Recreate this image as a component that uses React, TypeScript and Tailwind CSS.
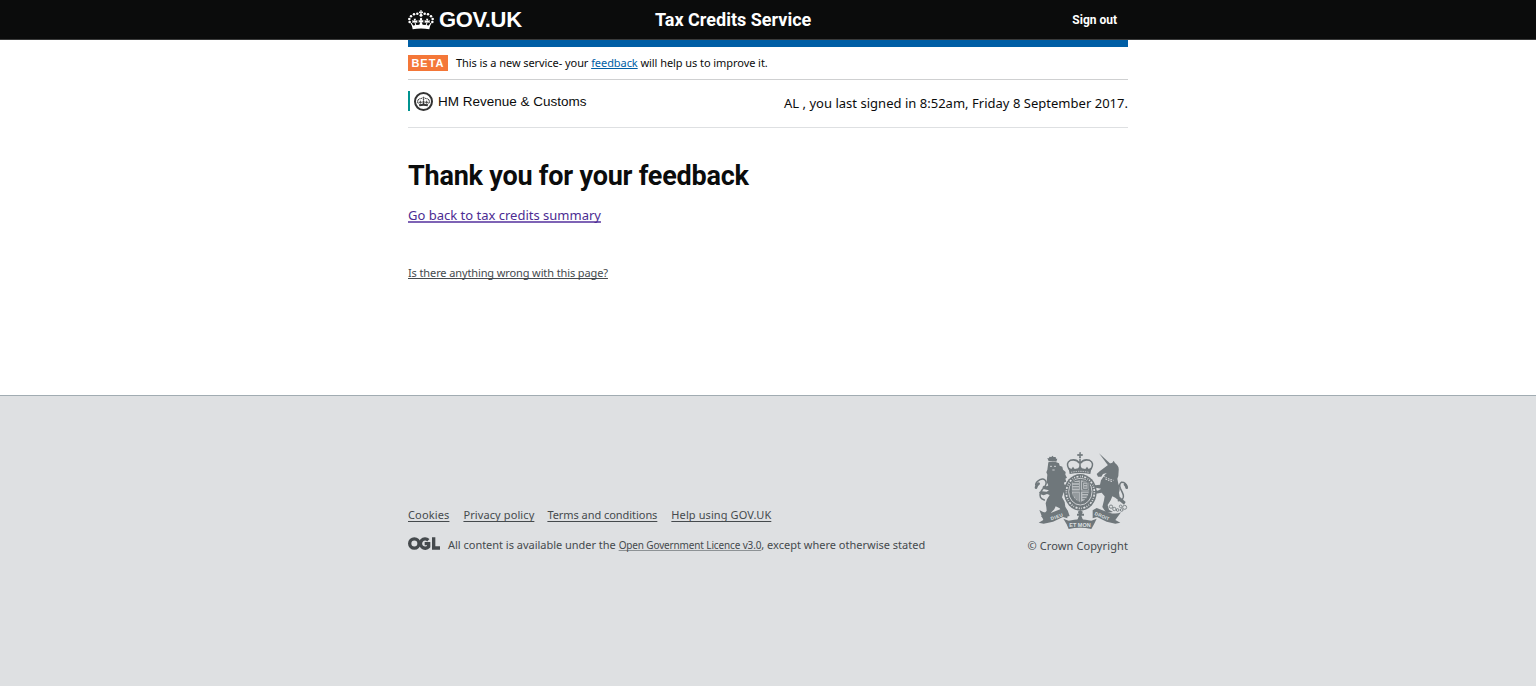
import React from "react";

function Crown({ className }: { className?: string }) {
  return (
    <svg viewBox="0 0 78 60" className={className} fill="currentColor" aria-hidden="true">
      <circle cx="39" cy="16" r="4.500" />
      <path d="M36.500 1h5l-1 4.500 4.500-1v5l-4.500-1 1 5h-5l1-5-4.500 1v-5l4.500 1z" />
      <circle cx="28" cy="11" r="3.800" />
      <circle cx="50" cy="11" r="3.800" />
      <circle cx="18" cy="13" r="3.800" />
      <circle cx="60" cy="13" r="3.800" />
      <circle cx="9" cy="19" r="3.800" />
      <circle cx="69" cy="19" r="3.800" />
      <circle cx="4" cy="27" r="3.800" />
      <circle cx="74" cy="27" r="3.800" />
      <circle cx="5" cy="36" r="3.800" />
      <circle cx="73" cy="36" r="3.800" />
      <circle cx="39" cy="26" r="3" />
      <path d="M7 38l4 1 5 8 6-1-3-9-6 2v-9l6 3-2-7h7l-2 7 6-3v9l-6-2 3 8 9-1 3-8-5 2v-9l5 3-2-6h8l-2 6 5-3v9l-5-2 3 8 9 1 3-8-6 2v-9l6 3-2-7h7l-2 7 6-3v9l-6-2-3 9 6 1 5-8 4-1-6 12H13z" />
      <path d="M12 48q27-6 54 0l-2 10q-25-5-50 0z" />
    </svg>
  );
}

function RoyalArms() {
  return (
    <svg viewBox="39 33 288 237" className="block h-[79px] w-[96px] text-[#6f777b]" fill="currentColor" aria-hidden="true">
      {/* lion */}
      <path d="M86 64l-4-10 5 1 1-5 6 1 3-4 4 4 6 0 1 5 4 0-3 9q-12-4-23-1z" />
      <path d="M85 67q13-5 24 0l8 3 2 7 8 3 2 9 8 7-1 8 5 9-5 3 3 9-6 2-1 6 8 3 8-3 4 5-9 8-8 4-5 10-4 12 8 14 2 14 8 14 5 14-13 3-8-12-9-14-12-6-4 9-9 9-5 8 5 11-12 4-8-3 7-6-12 3-6-5 9-7 8-10-1-10-2-12 4-12 8-13-8-3-10 4-10-3-4-7 9-2 14 1 7-4-14-3-6-6 4-5 10 2 4-3-5-10 1-12 1-10-3-7 3-8z" />
      <path d="M90 79h6M102 79h6M97 90h7" stroke="#dee0e2" strokeWidth="2.500" fill="none" />
      <g fill="none" stroke="currentColor" strokeLinecap="round">
        <path d="M73 180q-17-5-12-21 4-9 12-17 10-13 2-22-6-5-15-1-12 6-13 15" strokeWidth="4.500" />
        <path d="M48 143q2-8 8-12" strokeWidth="8" />
      </g>
      {/* unicorn */}
      <path d="M237 40l35 32-7 5z" />
      <path d="M263 76q7-7 14-8l4-6 4 7q13 9 11 23l-1 16-3 8 3 15q7 13 2 27l2 12 18 16-5 8-11-9-15-12-9-4-5 12-9 14 4 14 12 7-20 3-12-18 5-20 2-12-9-11-18 3-10-5 4-8 12 4 11-6-17-3-16-7-14-1-4-7 8-4 11 5 14 7 14-2 3-13 11-16 6-6-11 3-5 8-10 0-4-8 9-8z" />
      <g fill="none" stroke="currentColor" strokeLinecap="round">
        <path d="M295 182q18-2 15-17-3-9-9-20-5-13 3-18 14-1 18 16" strokeWidth="4.500" />
        <path d="M315 134q4 4 5 9" strokeWidth="8" />
      </g>
      <g fill="none" stroke="currentColor" strokeWidth="2.500">
        <circle cx="273" cy="200" r="5" /><circle cx="283" cy="207" r="5" /><circle cx="293" cy="210" r="4" />
        <circle cx="305" cy="210" r="4" /><circle cx="314" cy="202" r="6" /><circle cx="302" cy="199" r="4" />
      </g>
      <path d="M250 108q14 9 31 13M256 117l20 8" stroke="#dee0e2" strokeWidth="3" fill="none" strokeDasharray="5 3" />
      {/* crown */}
      <path d="M178 37h5l-1 6 6-1v6l-6-1 1 8h-6l1-8-6 1v-6l6 1z" />
      <g fill="none" stroke="currentColor" strokeWidth="4.500">
        <path d="M147 88q-11-19 4-27 18-5 27 8M213 88q11-19-4-27-18-5-27 8M180 57v30" />
      </g>
      <path d="M145 82l9 5 5-7 5 7 10-2 6-8 6 8 10 2 5-7 5 7 9-5-4 20q-31-6-62 0z" />
      <path d="M153 97q27-6 54 0" stroke="#dee0e2" strokeWidth="2.500" fill="none" strokeDasharray="4 3" />
      {/* shield and garter */}
      <ellipse cx="181" cy="157" rx="49" ry="55" />
      <ellipse cx="181" cy="157" rx="42" ry="48" fill="none" stroke="#dee0e2" strokeWidth="5" strokeDasharray="3 4 6 5 2 4" />
      <ellipse cx="181" cy="155" rx="35" ry="40" fill="none" stroke="#dee0e2" strokeWidth="2.500" />
      <path d="M154 127q27-16 54 0v28q-3 24-27 33-24-9-27-33z" fill="#b9bdc0" />
      <g fill="none" stroke="#6f777b" strokeWidth="3">
        <path d="M154 127q27-16 54 0v28q-3 24-27 33-24-9-27-33zM181 117v70M153 153h56M158 128h19M158 136h19M158 144h19M188 126v22h16v-22zM192 133h8M192 141h8M162 158v12M168 158v20M174 158v25M187 160h18M187 168h16M187 176h11" />
      </g>
      {/* motto ribbons */}
      <path d="M58 210q16 12 36 8l36-14 12 7 0 24-13-4-30 14-28 6-15-3 14-8zM303 217q-14 7-36 1l-37-14-12 7 0 24 13-4 29 14 26 6 15-3-15-8z" />
      <path d="M130 236l16 6q34-9 68 0l16-6-8 17-8 14q-33-8-68 0l-6-14z" />
      <path d="M171 221h5q-5-7 2-8 3-5 6 0 7 1 2 8h6v6h-8l5 13h-17l5-13h-6z" />
      <g fill="#dee0e2" fontFamily="Liberation Sans, sans-serif" fontSize="14" fontWeight="700">
        <text x="94" y="241" transform="rotate(-20 94 241)" textLength="38">DIEU</text>
        <text x="148" y="261" textLength="64" lengthAdjust="spacingAndGlyphs">ET MON</text>
        <text x="223" y="224" transform="rotate(23 223 224)" textLength="46">DROIT</text>
      </g>
    </svg>
  );
}

function Ogl() {
  return (
    <svg viewBox="0 0 96 39" className="mr-2 block h-[13px] w-[32px]" fill="none" stroke="#454a4d" strokeWidth="10" aria-hidden="true">
      <circle cx="19" cy="19.500" r="14" />
      <path d="M61 9.500A14 14 0 1 0 62 29V20H50M77 1V33H96" />
    </svg>
  );
}

const footerLink = "underline decoration-1 underline-offset-[2px] [text-decoration-skip-ink:none]";

export default function App() {
  return (
    <div className="flex h-[686px] flex-col overflow-hidden bg-white font-['Noto_Sans',sans-serif] text-[#0b0c0c]">
      <header className="h-10 border-b border-[#3a3b3b] bg-[#0b0c0c] text-white">
        <div className="mx-auto flex h-[39px] w-[720px] items-center whitespace-nowrap">
          <Crown className="mr-[5px] h-5 w-[26px]" />
          <div className="w-[216px] pt-px font-['Liberation_Sans',sans-serif] text-[22px] font-bold leading-[38px] tracking-[-0.35px]">GOV.UK</div>
          <div className="font-['Roboto',sans-serif] text-[18px] font-bold leading-[39px]">Tax Credits Service</div>
          <div className="ml-auto mr-[11px] font-['Roboto',sans-serif] text-[12px] font-bold">Sign out</div>
        </div>
      </header>
      <main className="mx-auto h-[355px] w-[720px] whitespace-nowrap">
        <div className="h-[7px] bg-[#005ea5]" />
        <div className="flex h-[33px] items-center border-b border-[#cfd0d1] text-[11px]">
          <strong className="mr-2 flex h-4 w-10 items-center justify-center bg-[#f47738] font-['Liberation_Sans',sans-serif] text-[11px] tracking-[1px] text-white">BETA</strong>
          <p className="tracking-[-0.065px]">This is a new service- your <a className="text-[#005ea5] underline">feedback</a> will help us to improve it.</p>
        </div>
        <div className="flex h-12 items-start justify-between border-b border-[#dee0e2]">
          <div className="mt-[11px] flex h-5 items-center border-l-2 border-[#009390] pl-1 font-['Liberation_Sans',sans-serif] text-[13.5px]">
            <span className="mr-[5px] flex size-[19px] shrink-0 items-center justify-center rounded-full border-2 border-[#333] text-[#333]">
              <Crown className="h-[11px] w-[13px]" />
            </span>
            <span className="pt-0.5">HM Revenue &amp; Customs</span>
          </div>
          <p className="mt-[13px] text-[13px] leading-5 tracking-[0.02px]">AL , you last signed in 8:52am, Friday 8 September 2017.</p>
        </div>
        <h1 className="mt-[32px] font-['Roboto',sans-serif] text-[27px] font-bold leading-8 tracking-[-0.22px]">Thank you for your feedback</h1>
        <a className="mt-[13px] block w-fit text-[13px] leading-5 text-[#4c2c92] underline decoration-[#7e63b5] decoration-2 underline-offset-[1px] [text-decoration-skip-ink:none]">Go back to tax credits summary</a>
        <a className="mt-[38px] block w-fit text-[11px] leading-5 tracking-[-0.115px] text-[#454a4d] underline [text-decoration-skip-ink:none]">Is there anything wrong with this page?</a>
      </main>
      <footer className="flex-1 border-t border-[#a1acb2] bg-[#dee0e2] text-[#454a4d]">
        <div className="mx-auto flex w-[720px] justify-between whitespace-nowrap pt-[55px]">
          <div className="pt-[54px] text-[11px]">
            <ul className="flex leading-5">
              <li className="mr-[14px] tracking-[0.14px]"><a className={footerLink}>Cookies</a></li>
              <li className="mr-[13px] tracking-[0.1px]"><a className={footerLink}>Privacy policy</a></li>
              <li className="mr-[14px] tracking-[-0.05px]"><a className={footerLink}>Terms and conditions</a></li>
              <li className="tracking-[0.1px]"><a className={footerLink}>Help using GOV.UK</a></li>
            </ul>
            <div className="mt-[10px] flex items-start leading-5">
              <div className="pt-[2px]"><Ogl /></div>
              <p><span className="tracking-[-0.02px]">All content is available under the </span><a className="text-[10px] tracking-[-0.14px] underline decoration-[#8d9295] [text-decoration-skip-ink:none]">Open Government Licence v3.0</a>, except where otherwise stated</p>
            </div>
          </div>
          <div className="flex flex-col items-end">
            <div className="-mr-px"><RoyalArms /></div>
            <p className="mt-[6px] text-[11px] leading-5 tracking-[0.1px]">© Crown Copyright</p>
          </div>
        </div>
      </footer>
    </div>
  );
}
